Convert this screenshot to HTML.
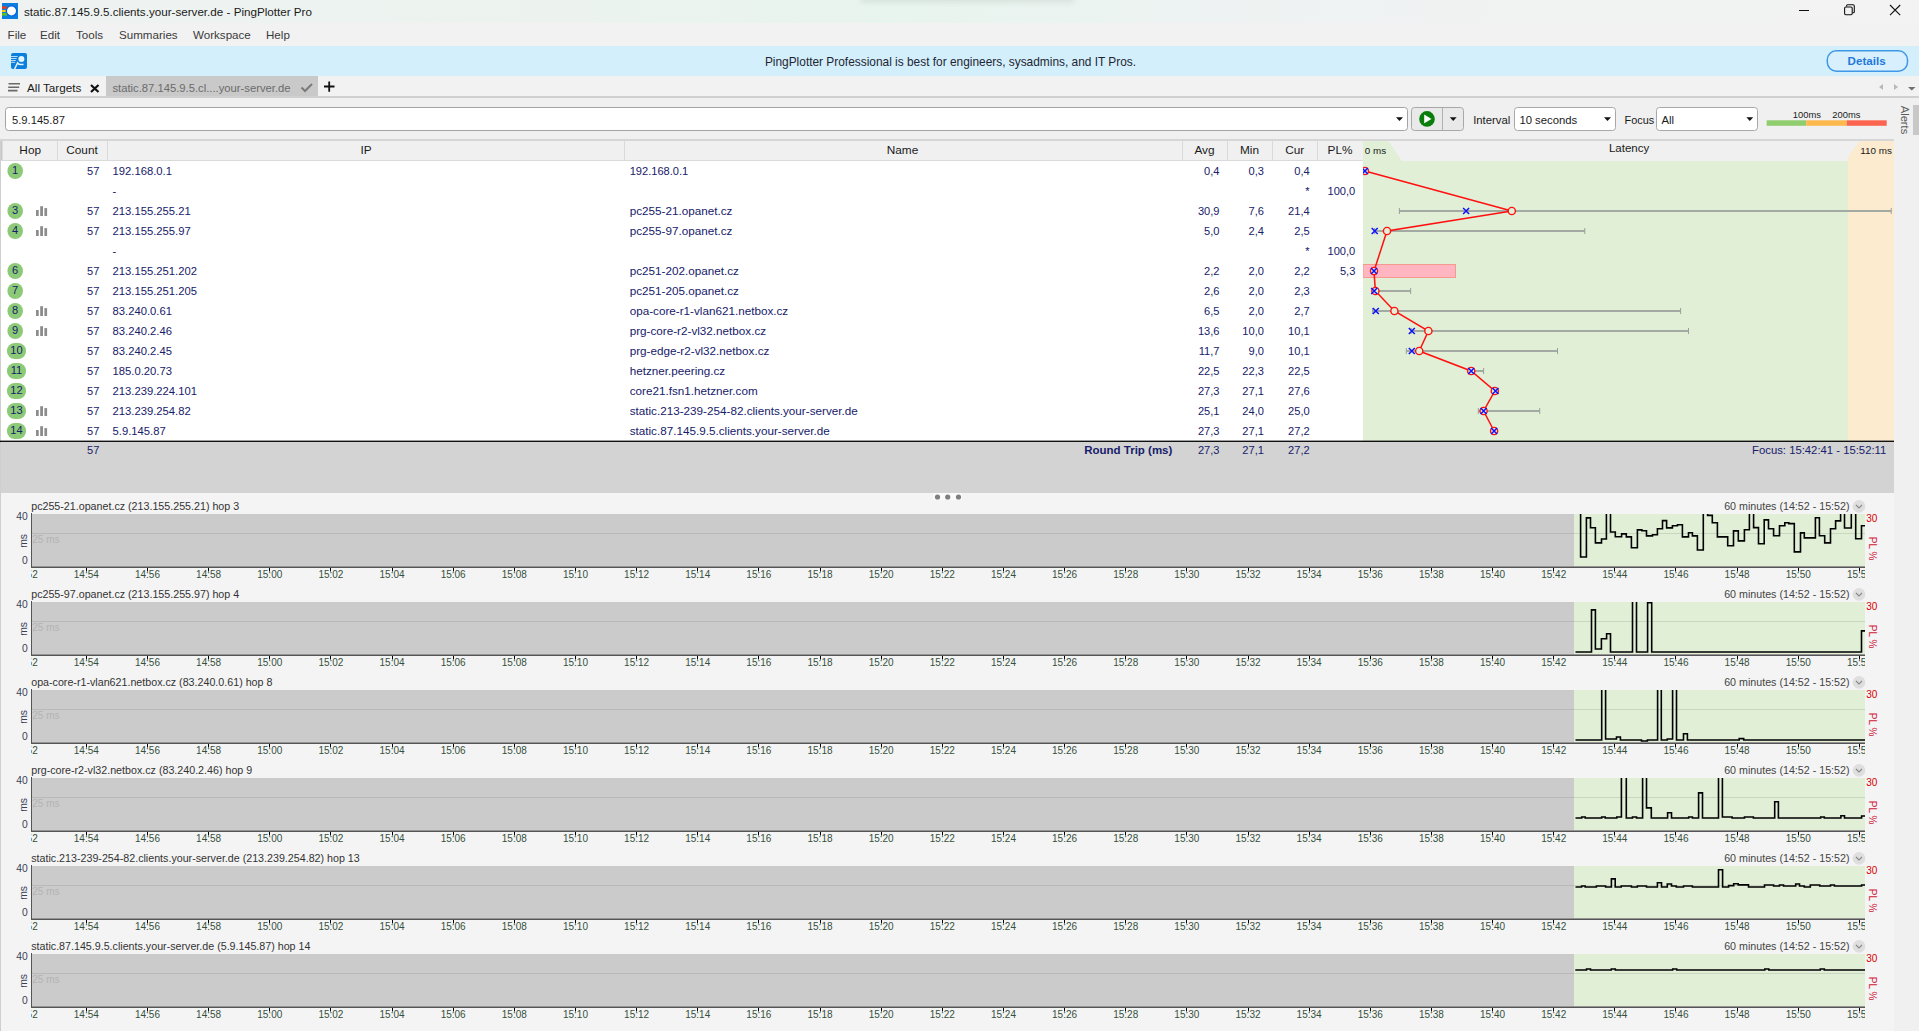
<!DOCTYPE html>
<html><head><meta charset="utf-8"><title>PingPlotter Pro</title>
<style>
html,body{margin:0;padding:0;background:#f0f0f0;overflow:hidden;}
svg{display:block;font-family:"Liberation Sans", sans-serif;}
text{white-space:pre;}
</style></head><body>
<svg width="1919" height="1031" viewBox="0 0 1919 1031">
<defs><linearGradient id="tg" x1="0" x2="1" y1="0" y2="0"><stop offset="0" stop-color="#eef3f1"/><stop offset="0.3" stop-color="#ecf3ef"/><stop offset="0.47" stop-color="#e8f4ee"/><stop offset="0.62" stop-color="#edf3f2"/><stop offset="0.8" stop-color="#f1f2f2"/><stop offset="1" stop-color="#f3f3f3"/></linearGradient><clipPath id="gclip"><rect x="1363" y="161" width="531" height="279"/></clipPath><clipPath id="plotclip"><rect x="31" y="0" width="1834" height="1031"/></clipPath></defs>
<rect x="0" y="0" width="1919" height="23" fill="url(#tg)" />
<defs><filter id="blr" x="-20%" y="-200%" width="140%" height="500%"><feGaussianBlur stdDeviation="2.5"/></filter></defs>
<rect x="860" y="-5" width="215" height="8" rx="4" fill="#506050" opacity="0.10" filter="url(#blr)"/>
<rect x="0" y="23" width="1919" height="23" fill="#f2f2f2" />
<rect x="0" y="46" width="1919" height="30" fill="#d4effc" />
<rect x="0" y="76" width="1919" height="20" fill="#f2f2f2" />
<rect x="0" y="96" width="1919" height="2.6" fill="#d0d0d0" />
<rect x="0" y="98" width="1919" height="43" fill="#f0f0f0" />
<rect x="0" y="139" width="1894" height="2" fill="#d6d6d6" />
<rect x="2" y="3" width="16" height="16" fill="#0a7fe0" />
<circle cx="11.5" cy="10.9" r="5.6" fill="#0062d6"/>
<circle cx="11.5" cy="10.9" r="4.5" fill="#ffffff"/>
<path d="M2,6.4 h4.8 v2.4 h-4.8 z" fill="#f03a17"/>
<path d="M2,10 h3.7 v2 h-3.7 z" fill="#ffcc00"/>
<path d="M2,13 h4.8 v2.6 h-4.8 z" fill="#5cc21a"/>
<text x="24" y="15.5" font-size="11.65" fill="#1a1a1a" text-anchor="start" font-weight="400" >static.87.145.9.5.clients.your-server.de - PingPlotter Pro</text>
<line x1="1799" y1="10.5" x2="1809" y2="10.5" stroke="#111" stroke-width="1" />
<rect x="1844.6" y="7" width="7.6" height="7.8" rx="1.2" fill="none" stroke="#111" stroke-width="1.1"/>
<path d="M1846.6,6.6 v-0.8 q0,-1 1,-1 h5.4 q1.3,0 1.3,1.3 v5.6 q0,1 -1,1 h-0.8" fill="none" stroke="#111" stroke-width="1.1"/>
<path d="M1890,5 L1900.2,15.2 M1900.2,5 L1890,15.2" stroke="#111" stroke-width="1.1"/>
<text x="7.6" y="38.8" font-size="11.6" fill="#3a3a3a" text-anchor="start" font-weight="400" >File</text>
<text x="40" y="38.8" font-size="11.6" fill="#3a3a3a" text-anchor="start" font-weight="400" >Edit</text>
<text x="76" y="38.8" font-size="11.6" fill="#3a3a3a" text-anchor="start" font-weight="400" >Tools</text>
<text x="119" y="38.8" font-size="11.6" fill="#3a3a3a" text-anchor="start" font-weight="400" >Summaries</text>
<text x="193" y="38.8" font-size="11.6" fill="#3a3a3a" text-anchor="start" font-weight="400" >Workspace</text>
<text x="266" y="38.8" font-size="11.6" fill="#3a3a3a" text-anchor="start" font-weight="400" >Help</text>
<rect x="11" y="53" width="16" height="16" rx="2" fill="#0a80dc"/>
<path d="M11,56.5 h6.6 M11,58.5 h5.6 M11,60.5 h4.8 M11,62.3 h4.2" stroke="#b8dcf6" stroke-width="1"/>
<circle cx="21.4" cy="59" r="3" fill="#e6f4fd"/>
<path d="M14.6,69 L17.6,62.8 C18.5,64.5 20.5,65 23.5,64.3" fill="none" stroke="#e6f4fd" stroke-width="1.5"/>
<text x="950.5" y="66.4" font-size="11.9" fill="#1e2633" text-anchor="middle" font-weight="400" >PingPlotter Professional is best for engineers, sysadmins, and IT Pros.</text>
<rect x="1827.3" y="50.8" width="80.2" height="20.4" rx="9" fill="#d8f0fd" stroke="#4097e6" stroke-width="1.5"/>
<text x="1866.6" y="65.3" font-size="11.6" fill="#1f78dc" text-anchor="middle" font-weight="700" >Details</text>
<path d="M8.5,83.8 h11.5 M8.2,87.2 h11 M8,90.6 h9.5" stroke="#6a6a6a" stroke-width="1.6"/>
<text x="27" y="91.6" font-size="11.7" fill="#1a1a1a" text-anchor="start" font-weight="400" >All Targets</text>
<path d="M91,85 L98.5,92 M98.5,85 L91,92" stroke="#111" stroke-width="2.2"/>
<rect x="106" y="76" width="212" height="20" fill="#c9c9c9" />
<text x="112.4" y="91.5" font-size="11.25" fill="#6b6b6b" text-anchor="start" font-weight="400" >static.87.145.9.5.cl....your-server.de</text>
<path d="M301.5,87.5 L305,91 L312,84" fill="none" stroke="#7a7a7a" stroke-width="2"/>
<path d="M324,86.5 h10.5 M329.2,81.5 v10.2" stroke="#111" stroke-width="1.8"/>
<path d="M1883,84 L1879,87 L1883,90 z" fill="#b8b8b8"/>
<path d="M1894,84 L1898,87 L1894,90 z" fill="#b8b8b8"/>
<path d="M1908,87 L1915.5,87 L1911.75,90.5 z" fill="#707070"/>
<rect x="5.5" y="107.5" width="1402" height="23" rx="3" fill="#fff" stroke="#a3a3a3" stroke-width="1"/>
<text x="12" y="124.2" font-size="11.2" fill="#1a1a1a" text-anchor="start" font-weight="400" >5.9.145.87</text>
<path d="M1396,117.2 L1403,117.2 L1399.5,121 z" fill="#111"/>
<rect x="1411.5" y="107.5" width="52" height="23" rx="3" fill="#e9e9e9" stroke="#a8a8a8" stroke-width="1"/>
<line x1="1442.5" y1="108" x2="1442.5" y2="130" stroke="#b0b0b0" stroke-width="1" />
<circle cx="1427" cy="118.9" r="7.8" fill="#0a7d0a"/>
<path d="M1424.2,114.6 L1431.5,118.9 L1424.2,123.2 z" fill="#fff"/>
<path d="M1449.8,117.2 L1456.6,117.2 L1453.2,121 z" fill="#111"/>
<text x="1473.2" y="123.6" font-size="11.3" fill="#1a1a1a" text-anchor="start" font-weight="400" >Interval</text>
<rect x="1514.5" y="107.5" width="101" height="23" rx="3" fill="#fff" stroke="#a8a8a8" stroke-width="1"/>
<text x="1519.4" y="124.2" font-size="11.3" fill="#1a1a1a" text-anchor="start" font-weight="400" >10 seconds</text>
<path d="M1604,117.2 L1611,117.2 L1607.5,121 z" fill="#111"/>
<text x="1624.5" y="123.6" font-size="10.9" fill="#1a1a1a" text-anchor="start" font-weight="400" >Focus</text>
<rect x="1656.5" y="107.5" width="101" height="23" rx="3" fill="#fff" stroke="#a8a8a8" stroke-width="1"/>
<text x="1661.5" y="124.2" font-size="11.3" fill="#1a1a1a" text-anchor="start" font-weight="400" >All</text>
<path d="M1746.4,117.2 L1753.2,117.2 L1749.8,121 z" fill="#111"/>
<text x="1792.8" y="117.8" font-size="9.4" fill="#1a1a1a" text-anchor="start" font-weight="400" >100ms</text>
<text x="1832.3" y="117.8" font-size="9.4" fill="#1a1a1a" text-anchor="start" font-weight="400" >200ms</text>
<rect x="1766.7" y="120.3" width="39.5" height="5.5" fill="#8fcd6e" />
<rect x="1806.2" y="120.3" width="40.5" height="5.5" fill="#fdb94e" />
<rect x="1846.7" y="120.3" width="40" height="5.5" fill="#fb6550" />
<text x="0" y="0" font-size="11.2" fill="#5a5a5a" text-anchor="middle" font-weight="400" transform="translate(1901.2,120) rotate(90)">Alerts</text>
<rect x="1913" y="105" width="6" height="30" fill="#c8c8c8" />
<rect x="0" y="141" width="1894" height="20" fill="#f0f0f0" />
<rect x="0" y="141" width="2.5" height="20" fill="#c8c8c8" />
<rect x="0" y="160" width="1363" height="1" fill="#dadada" />
<rect x="57" y="141" width="1" height="19" fill="#d9d9d9" />
<rect x="107" y="141" width="1" height="19" fill="#d9d9d9" />
<rect x="624" y="141" width="1" height="19" fill="#d9d9d9" />
<rect x="1182" y="141" width="1" height="19" fill="#d9d9d9" />
<rect x="1227" y="141" width="1" height="19" fill="#d9d9d9" />
<rect x="1272" y="141" width="1" height="19" fill="#d9d9d9" />
<rect x="1317" y="141" width="1" height="19" fill="#d9d9d9" />
<text x="30.2" y="153.8" font-size="11.8" fill="#1a1a1a" text-anchor="middle" font-weight="400" >Hop</text>
<text x="82" y="153.8" font-size="11.8" fill="#1a1a1a" text-anchor="middle" font-weight="400" >Count</text>
<text x="366" y="153.8" font-size="11.8" fill="#1a1a1a" text-anchor="middle" font-weight="400" >IP</text>
<text x="902.5" y="153.8" font-size="11.8" fill="#1a1a1a" text-anchor="middle" font-weight="400" >Name</text>
<text x="1204.5" y="153.8" font-size="11.8" fill="#1a1a1a" text-anchor="middle" font-weight="400" >Avg</text>
<text x="1249.5" y="153.8" font-size="11.8" fill="#1a1a1a" text-anchor="middle" font-weight="400" >Min</text>
<text x="1294.8" y="153.8" font-size="11.8" fill="#1a1a1a" text-anchor="middle" font-weight="400" >Cur</text>
<text x="1340" y="153.8" font-size="11.8" fill="#1a1a1a" text-anchor="middle" font-weight="400" >PL%</text>
<rect x="0" y="161" width="1363" height="280" fill="#ffffff" />
<rect x="0" y="141" width="1" height="890" fill="#cfcfcf" />
<path d="M1363,141 L1388.3,141 L1401.8,161 L1848,161 L1848,157 L1860,141 L1894,141 L1894,441 L1363,441 z" fill="#e0efd6"/>
<path d="M1848,441 L1848,157 L1860,141 L1894,141 L1894,441 z" fill="#fdebd0"/>
<text x="1364.8" y="153.8" font-size="9.8" fill="#1a1a1a" text-anchor="start" font-weight="400" >0 ms</text>
<text x="1629.1" y="152.3" font-size="11.5" fill="#1a1a1a" text-anchor="middle" font-weight="400" >Latency</text>
<text x="1892" y="154" font-size="9.9" fill="#1a1a1a" text-anchor="end" font-weight="400" >110 ms</text>
<rect x="7.3999999999999995" y="163" width="15.6" height="16" rx="8" fill="#8dca78"/>
<text x="15.2" y="173.9" font-size="11.1" fill="#16206a" text-anchor="middle" font-weight="400" >1</text>
<text x="99.4" y="174.5" font-size="11.1" fill="#16206a" text-anchor="end" font-weight="400" >57</text>
<text x="112.5" y="174.5" font-size="11.25" fill="#16206a" text-anchor="start" font-weight="400" >192.168.0.1</text>
<text x="629.7" y="174.5" font-size="11.1" fill="#16206a" text-anchor="start" font-weight="400" >192.168.0.1</text>
<text x="1219.5" y="174.5" font-size="11.1" fill="#16206a" text-anchor="end" font-weight="400" >0,4</text>
<text x="1263.9" y="174.5" font-size="11.1" fill="#16206a" text-anchor="end" font-weight="400" >0,3</text>
<text x="1309.7" y="174.5" font-size="11.1" fill="#16206a" text-anchor="end" font-weight="400" >0,4</text>
<text x="112.5" y="194.5" font-size="11.25" fill="#16206a" text-anchor="start" font-weight="400" >-</text>
<text x="1309.7" y="194.5" font-size="11.1" fill="#16206a" text-anchor="end" font-weight="400" >*</text>
<text x="1355.3" y="194.5" font-size="11.1" fill="#16206a" text-anchor="end" font-weight="400" >100,0</text>
<rect x="7.3999999999999995" y="203" width="15.6" height="16" rx="8" fill="#8dca78"/>
<text x="15.2" y="213.9" font-size="11.1" fill="#16206a" text-anchor="middle" font-weight="400" >3</text>
<rect x="36" y="210" width="2.7" height="6" fill="#8c8c8c" />
<rect x="40.2" y="206.2" width="2.8" height="9.8" fill="#8c8c8c" />
<rect x="44.4" y="208.1" width="2.7" height="7.9" fill="#8c8c8c" />
<text x="99.4" y="214.5" font-size="11.1" fill="#16206a" text-anchor="end" font-weight="400" >57</text>
<text x="112.5" y="214.5" font-size="11.25" fill="#16206a" text-anchor="start" font-weight="400" >213.155.255.21</text>
<text x="629.7" y="214.5" font-size="11.7" fill="#16206a" text-anchor="start" font-weight="400" >pc255-21.opanet.cz</text>
<text x="1219.5" y="214.5" font-size="11.1" fill="#16206a" text-anchor="end" font-weight="400" >30,9</text>
<text x="1263.9" y="214.5" font-size="11.1" fill="#16206a" text-anchor="end" font-weight="400" >7,6</text>
<text x="1309.7" y="214.5" font-size="11.1" fill="#16206a" text-anchor="end" font-weight="400" >21,4</text>
<rect x="7.3999999999999995" y="223" width="15.6" height="16" rx="8" fill="#8dca78"/>
<text x="15.2" y="233.9" font-size="11.1" fill="#16206a" text-anchor="middle" font-weight="400" >4</text>
<rect x="36" y="230" width="2.7" height="6" fill="#8c8c8c" />
<rect x="40.2" y="226.2" width="2.8" height="9.8" fill="#8c8c8c" />
<rect x="44.4" y="228.1" width="2.7" height="7.9" fill="#8c8c8c" />
<text x="99.4" y="234.5" font-size="11.1" fill="#16206a" text-anchor="end" font-weight="400" >57</text>
<text x="112.5" y="234.5" font-size="11.25" fill="#16206a" text-anchor="start" font-weight="400" >213.155.255.97</text>
<text x="629.7" y="234.5" font-size="11.7" fill="#16206a" text-anchor="start" font-weight="400" >pc255-97.opanet.cz</text>
<text x="1219.5" y="234.5" font-size="11.1" fill="#16206a" text-anchor="end" font-weight="400" >5,0</text>
<text x="1263.9" y="234.5" font-size="11.1" fill="#16206a" text-anchor="end" font-weight="400" >2,4</text>
<text x="1309.7" y="234.5" font-size="11.1" fill="#16206a" text-anchor="end" font-weight="400" >2,5</text>
<text x="112.5" y="254.5" font-size="11.25" fill="#16206a" text-anchor="start" font-weight="400" >-</text>
<text x="1309.7" y="254.5" font-size="11.1" fill="#16206a" text-anchor="end" font-weight="400" >*</text>
<text x="1355.3" y="254.5" font-size="11.1" fill="#16206a" text-anchor="end" font-weight="400" >100,0</text>
<rect x="7.3999999999999995" y="263" width="15.6" height="16" rx="8" fill="#8dca78"/>
<text x="15.2" y="273.9" font-size="11.1" fill="#16206a" text-anchor="middle" font-weight="400" >6</text>
<text x="99.4" y="274.5" font-size="11.1" fill="#16206a" text-anchor="end" font-weight="400" >57</text>
<text x="112.5" y="274.5" font-size="11.25" fill="#16206a" text-anchor="start" font-weight="400" >213.155.251.202</text>
<text x="629.7" y="274.5" font-size="11.7" fill="#16206a" text-anchor="start" font-weight="400" >pc251-202.opanet.cz</text>
<text x="1219.5" y="274.5" font-size="11.1" fill="#16206a" text-anchor="end" font-weight="400" >2,2</text>
<text x="1263.9" y="274.5" font-size="11.1" fill="#16206a" text-anchor="end" font-weight="400" >2,0</text>
<text x="1309.7" y="274.5" font-size="11.1" fill="#16206a" text-anchor="end" font-weight="400" >2,2</text>
<text x="1355.3" y="274.5" font-size="11.1" fill="#16206a" text-anchor="end" font-weight="400" >5,3</text>
<rect x="7.3999999999999995" y="283" width="15.6" height="16" rx="8" fill="#8dca78"/>
<text x="15.2" y="293.9" font-size="11.1" fill="#16206a" text-anchor="middle" font-weight="400" >7</text>
<text x="99.4" y="294.5" font-size="11.1" fill="#16206a" text-anchor="end" font-weight="400" >57</text>
<text x="112.5" y="294.5" font-size="11.25" fill="#16206a" text-anchor="start" font-weight="400" >213.155.251.205</text>
<text x="629.7" y="294.5" font-size="11.7" fill="#16206a" text-anchor="start" font-weight="400" >pc251-205.opanet.cz</text>
<text x="1219.5" y="294.5" font-size="11.1" fill="#16206a" text-anchor="end" font-weight="400" >2,6</text>
<text x="1263.9" y="294.5" font-size="11.1" fill="#16206a" text-anchor="end" font-weight="400" >2,0</text>
<text x="1309.7" y="294.5" font-size="11.1" fill="#16206a" text-anchor="end" font-weight="400" >2,3</text>
<rect x="7.3999999999999995" y="303" width="15.6" height="16" rx="8" fill="#8dca78"/>
<text x="15.2" y="313.9" font-size="11.1" fill="#16206a" text-anchor="middle" font-weight="400" >8</text>
<rect x="36" y="310" width="2.7" height="6" fill="#8c8c8c" />
<rect x="40.2" y="306.2" width="2.8" height="9.8" fill="#8c8c8c" />
<rect x="44.4" y="308.1" width="2.7" height="7.9" fill="#8c8c8c" />
<text x="99.4" y="314.5" font-size="11.1" fill="#16206a" text-anchor="end" font-weight="400" >57</text>
<text x="112.5" y="314.5" font-size="11.25" fill="#16206a" text-anchor="start" font-weight="400" >83.240.0.61</text>
<text x="629.7" y="314.5" font-size="11.7" fill="#16206a" text-anchor="start" font-weight="400" >opa-core-r1-vlan621.netbox.cz</text>
<text x="1219.5" y="314.5" font-size="11.1" fill="#16206a" text-anchor="end" font-weight="400" >6,5</text>
<text x="1263.9" y="314.5" font-size="11.1" fill="#16206a" text-anchor="end" font-weight="400" >2,0</text>
<text x="1309.7" y="314.5" font-size="11.1" fill="#16206a" text-anchor="end" font-weight="400" >2,7</text>
<rect x="7.3999999999999995" y="323" width="15.6" height="16" rx="8" fill="#8dca78"/>
<text x="15.2" y="333.9" font-size="11.1" fill="#16206a" text-anchor="middle" font-weight="400" >9</text>
<rect x="36" y="330" width="2.7" height="6" fill="#8c8c8c" />
<rect x="40.2" y="326.2" width="2.8" height="9.8" fill="#8c8c8c" />
<rect x="44.4" y="328.1" width="2.7" height="7.9" fill="#8c8c8c" />
<text x="99.4" y="334.5" font-size="11.1" fill="#16206a" text-anchor="end" font-weight="400" >57</text>
<text x="112.5" y="334.5" font-size="11.25" fill="#16206a" text-anchor="start" font-weight="400" >83.240.2.46</text>
<text x="629.7" y="334.5" font-size="11.7" fill="#16206a" text-anchor="start" font-weight="400" >prg-core-r2-vl32.netbox.cz</text>
<text x="1219.5" y="334.5" font-size="11.1" fill="#16206a" text-anchor="end" font-weight="400" >13,6</text>
<text x="1263.9" y="334.5" font-size="11.1" fill="#16206a" text-anchor="end" font-weight="400" >10,0</text>
<text x="1309.7" y="334.5" font-size="11.1" fill="#16206a" text-anchor="end" font-weight="400" >10,1</text>
<rect x="6.9" y="343" width="19.2" height="16" rx="8" fill="#8dca78"/>
<text x="16.5" y="353.9" font-size="11.1" fill="#16206a" text-anchor="middle" font-weight="400" >10</text>
<text x="99.4" y="354.5" font-size="11.1" fill="#16206a" text-anchor="end" font-weight="400" >57</text>
<text x="112.5" y="354.5" font-size="11.25" fill="#16206a" text-anchor="start" font-weight="400" >83.240.2.45</text>
<text x="629.7" y="354.5" font-size="11.7" fill="#16206a" text-anchor="start" font-weight="400" >prg-edge-r2-vl32.netbox.cz</text>
<text x="1219.5" y="354.5" font-size="11.1" fill="#16206a" text-anchor="end" font-weight="400" >11,7</text>
<text x="1263.9" y="354.5" font-size="11.1" fill="#16206a" text-anchor="end" font-weight="400" >9,0</text>
<text x="1309.7" y="354.5" font-size="11.1" fill="#16206a" text-anchor="end" font-weight="400" >10,1</text>
<rect x="6.9" y="363" width="19.2" height="16" rx="8" fill="#8dca78"/>
<text x="16.5" y="373.9" font-size="11.1" fill="#16206a" text-anchor="middle" font-weight="400" >11</text>
<text x="99.4" y="374.5" font-size="11.1" fill="#16206a" text-anchor="end" font-weight="400" >57</text>
<text x="112.5" y="374.5" font-size="11.25" fill="#16206a" text-anchor="start" font-weight="400" >185.0.20.73</text>
<text x="629.7" y="374.5" font-size="11.7" fill="#16206a" text-anchor="start" font-weight="400" >hetzner.peering.cz</text>
<text x="1219.5" y="374.5" font-size="11.1" fill="#16206a" text-anchor="end" font-weight="400" >22,5</text>
<text x="1263.9" y="374.5" font-size="11.1" fill="#16206a" text-anchor="end" font-weight="400" >22,3</text>
<text x="1309.7" y="374.5" font-size="11.1" fill="#16206a" text-anchor="end" font-weight="400" >22,5</text>
<rect x="6.9" y="383" width="19.2" height="16" rx="8" fill="#8dca78"/>
<text x="16.5" y="393.9" font-size="11.1" fill="#16206a" text-anchor="middle" font-weight="400" >12</text>
<text x="99.4" y="394.5" font-size="11.1" fill="#16206a" text-anchor="end" font-weight="400" >57</text>
<text x="112.5" y="394.5" font-size="11.25" fill="#16206a" text-anchor="start" font-weight="400" >213.239.224.101</text>
<text x="629.7" y="394.5" font-size="11.7" fill="#16206a" text-anchor="start" font-weight="400" >core21.fsn1.hetzner.com</text>
<text x="1219.5" y="394.5" font-size="11.1" fill="#16206a" text-anchor="end" font-weight="400" >27,3</text>
<text x="1263.9" y="394.5" font-size="11.1" fill="#16206a" text-anchor="end" font-weight="400" >27,1</text>
<text x="1309.7" y="394.5" font-size="11.1" fill="#16206a" text-anchor="end" font-weight="400" >27,6</text>
<rect x="6.9" y="403" width="19.2" height="16" rx="8" fill="#8dca78"/>
<text x="16.5" y="413.9" font-size="11.1" fill="#16206a" text-anchor="middle" font-weight="400" >13</text>
<rect x="36" y="410" width="2.7" height="6" fill="#8c8c8c" />
<rect x="40.2" y="406.2" width="2.8" height="9.8" fill="#8c8c8c" />
<rect x="44.4" y="408.1" width="2.7" height="7.9" fill="#8c8c8c" />
<text x="99.4" y="414.5" font-size="11.1" fill="#16206a" text-anchor="end" font-weight="400" >57</text>
<text x="112.5" y="414.5" font-size="11.25" fill="#16206a" text-anchor="start" font-weight="400" >213.239.254.82</text>
<text x="629.7" y="414.5" font-size="11.7" fill="#16206a" text-anchor="start" font-weight="400" >static.213-239-254-82.clients.your-server.de</text>
<text x="1219.5" y="414.5" font-size="11.1" fill="#16206a" text-anchor="end" font-weight="400" >25,1</text>
<text x="1263.9" y="414.5" font-size="11.1" fill="#16206a" text-anchor="end" font-weight="400" >24,0</text>
<text x="1309.7" y="414.5" font-size="11.1" fill="#16206a" text-anchor="end" font-weight="400" >25,0</text>
<rect x="6.9" y="423" width="19.2" height="16" rx="8" fill="#8dca78"/>
<text x="16.5" y="433.9" font-size="11.1" fill="#16206a" text-anchor="middle" font-weight="400" >14</text>
<rect x="36" y="430" width="2.7" height="6" fill="#8c8c8c" />
<rect x="40.2" y="426.2" width="2.8" height="9.8" fill="#8c8c8c" />
<rect x="44.4" y="428.1" width="2.7" height="7.9" fill="#8c8c8c" />
<text x="99.4" y="434.5" font-size="11.1" fill="#16206a" text-anchor="end" font-weight="400" >57</text>
<text x="112.5" y="434.5" font-size="11.25" fill="#16206a" text-anchor="start" font-weight="400" >5.9.145.87</text>
<text x="629.7" y="434.5" font-size="11.7" fill="#16206a" text-anchor="start" font-weight="400" >static.87.145.9.5.clients.your-server.de</text>
<text x="1219.5" y="434.5" font-size="11.1" fill="#16206a" text-anchor="end" font-weight="400" >27,3</text>
<text x="1263.9" y="434.5" font-size="11.1" fill="#16206a" text-anchor="end" font-weight="400" >27,1</text>
<text x="1309.7" y="434.5" font-size="11.1" fill="#16206a" text-anchor="end" font-weight="400" >27,2</text>
<g clip-path="url(#gclip)">
<rect x="1363" y="264.5" width="92.5" height="13" fill="#ffb6c1" stroke="#f59a8c" stroke-width="1"/>
<line x1="1399.4" y1="211" x2="1891.2" y2="211" stroke="#a3aaa3" stroke-width="2" />
<line x1="1399.4" y1="208" x2="1399.4" y2="214" stroke="#9aa09a" stroke-width="1" />
<line x1="1891.2" y1="208" x2="1891.2" y2="214" stroke="#9aa09a" stroke-width="1" />
<line x1="1374.6" y1="231" x2="1584.8" y2="231" stroke="#a3aaa3" stroke-width="2" />
<line x1="1374.6" y1="228" x2="1374.6" y2="234" stroke="#9aa09a" stroke-width="1" />
<line x1="1584.8" y1="228" x2="1584.8" y2="234" stroke="#9aa09a" stroke-width="1" />
<line x1="1372.6" y1="291" x2="1410.6" y2="291" stroke="#a3aaa3" stroke-width="2" />
<line x1="1372.6" y1="288" x2="1372.6" y2="294" stroke="#9aa09a" stroke-width="1" />
<line x1="1410.6" y1="288" x2="1410.6" y2="294" stroke="#9aa09a" stroke-width="1" />
<line x1="1372.6" y1="311" x2="1680.6" y2="311" stroke="#a3aaa3" stroke-width="2" />
<line x1="1372.6" y1="308" x2="1372.6" y2="314" stroke="#9aa09a" stroke-width="1" />
<line x1="1680.6" y1="308" x2="1680.6" y2="314" stroke="#9aa09a" stroke-width="1" />
<line x1="1411.2" y1="331" x2="1688.5" y2="331" stroke="#a3aaa3" stroke-width="2" />
<line x1="1411.2" y1="328" x2="1411.2" y2="334" stroke="#9aa09a" stroke-width="1" />
<line x1="1688.5" y1="328" x2="1688.5" y2="334" stroke="#9aa09a" stroke-width="1" />
<line x1="1406.3" y1="351" x2="1557.5" y2="351" stroke="#a3aaa3" stroke-width="2" />
<line x1="1406.3" y1="348" x2="1406.3" y2="354" stroke="#9aa09a" stroke-width="1" />
<line x1="1557.5" y1="348" x2="1557.5" y2="354" stroke="#9aa09a" stroke-width="1" />
<line x1="1470.3" y1="371" x2="1483.6" y2="371" stroke="#a3aaa3" stroke-width="2" />
<line x1="1470.3" y1="368" x2="1470.3" y2="374" stroke="#9aa09a" stroke-width="1" />
<line x1="1483.6" y1="368" x2="1483.6" y2="374" stroke="#9aa09a" stroke-width="1" />
<line x1="1478.3" y1="411" x2="1539.7" y2="411" stroke="#a3aaa3" stroke-width="2" />
<line x1="1478.3" y1="408" x2="1478.3" y2="414" stroke="#9aa09a" stroke-width="1" />
<line x1="1539.7" y1="408" x2="1539.7" y2="414" stroke="#9aa09a" stroke-width="1" />
<polyline points="1364.9,171 1511.8,211 1387,231 1374,271 1375.4,291 1394.4,311 1428.4,331 1419.2,351 1471.2,371 1494.8,391 1483.6,411 1494.1,431" fill="none" stroke="#ff1010" stroke-width="1.5"/>
<circle cx="1364.9" cy="171" r="3.6" fill="#e0efd6" stroke="#ff1010" stroke-width="1.4"/>
<circle cx="1511.8" cy="211" r="3.6" fill="#e0efd6" stroke="#ff1010" stroke-width="1.4"/>
<circle cx="1387" cy="231" r="3.6" fill="#e0efd6" stroke="#ff1010" stroke-width="1.4"/>
<circle cx="1374" cy="271" r="3.6" fill="#e0efd6" stroke="#ff1010" stroke-width="1.4"/>
<circle cx="1375.4" cy="291" r="3.6" fill="#e0efd6" stroke="#ff1010" stroke-width="1.4"/>
<circle cx="1394.4" cy="311" r="3.6" fill="#e0efd6" stroke="#ff1010" stroke-width="1.4"/>
<circle cx="1428.4" cy="331" r="3.6" fill="#e0efd6" stroke="#ff1010" stroke-width="1.4"/>
<circle cx="1419.2" cy="351" r="3.6" fill="#e0efd6" stroke="#ff1010" stroke-width="1.4"/>
<circle cx="1471.2" cy="371" r="3.6" fill="#e0efd6" stroke="#ff1010" stroke-width="1.4"/>
<circle cx="1494.8" cy="391" r="3.6" fill="#e0efd6" stroke="#ff1010" stroke-width="1.4"/>
<circle cx="1483.6" cy="411" r="3.6" fill="#e0efd6" stroke="#ff1010" stroke-width="1.4"/>
<circle cx="1494.1" cy="431" r="3.6" fill="#e0efd6" stroke="#ff1010" stroke-width="1.4"/>
<path d="M1361.9,168 L1367.9,174 M1367.9,168 L1361.9,174" stroke="#1010ff" stroke-width="1.5"/>
<path d="M1463.1,208 L1469.1,214 M1469.1,208 L1463.1,214" stroke="#1010ff" stroke-width="1.5"/>
<path d="M1371.7,228 L1377.7,234 M1377.7,228 L1371.7,234" stroke="#1010ff" stroke-width="1.5"/>
<path d="M1371,268 L1377,274 M1377,268 L1371,274" stroke="#1010ff" stroke-width="1.5"/>
<path d="M1371.2,288 L1377.2,294 M1377.2,288 L1371.2,294" stroke="#1010ff" stroke-width="1.5"/>
<path d="M1372.8,308 L1378.8,314 M1378.8,308 L1372.8,314" stroke="#1010ff" stroke-width="1.5"/>
<path d="M1408.8,328 L1414.8,334 M1414.8,328 L1408.8,334" stroke="#1010ff" stroke-width="1.5"/>
<path d="M1408.8,348 L1414.8,354 M1414.8,348 L1408.8,354" stroke="#1010ff" stroke-width="1.5"/>
<path d="M1468.2,368 L1474.2,374 M1474.2,368 L1468.2,374" stroke="#1010ff" stroke-width="1.5"/>
<path d="M1492.5,388 L1498.5,394 M1498.5,388 L1492.5,394" stroke="#1010ff" stroke-width="1.5"/>
<path d="M1480.6,408 L1486.6,414 M1486.6,408 L1480.6,414" stroke="#1010ff" stroke-width="1.5"/>
<path d="M1491.1,428 L1497.1,434 M1497.1,428 L1491.1,434" stroke="#1010ff" stroke-width="1.5"/>
</g>
<rect x="0" y="440.6" width="1894" height="1.5" fill="#111111" />
<rect x="1" y="442" width="1893" height="51" fill="#d3d3d3" />
<text x="99.4" y="454" font-size="11.1" fill="#16206a" text-anchor="end" font-weight="400" >57</text>
<text x="1084.2" y="453.8" font-size="11.5" fill="#16206a" text-anchor="start" font-weight="700" >Round Trip (ms)</text>
<text x="1219.5" y="454" font-size="11.1" fill="#16206a" text-anchor="end" font-weight="400" >27,3</text>
<text x="1263.9" y="454" font-size="11.1" fill="#16206a" text-anchor="end" font-weight="400" >27,1</text>
<text x="1309.7" y="454" font-size="11.1" fill="#16206a" text-anchor="end" font-weight="400" >27,2</text>
<text x="1886.3" y="454.3" font-size="11.3" fill="#16206a" text-anchor="end" font-weight="400" >Focus: 15:42:41 - 15:52:11</text>
<rect x="1" y="493" width="1893" height="538" fill="#f4f4f4" />
<rect x="933" y="493" width="29" height="7" fill="#fbfbfb" />
<circle cx="937.5" cy="497" r="2.6" fill="#7f7f7f"/>
<circle cx="947.7" cy="497" r="2.6" fill="#7f7f7f"/>
<circle cx="958.5" cy="497" r="2.6" fill="#7f7f7f"/>
<text x="31.2" y="509.5" font-size="10.7" fill="#333333" text-anchor="start" font-weight="400" >pc255-21.opanet.cz (213.155.255.21) hop 3</text>
<text x="1849.5" y="509.6" font-size="10.7" fill="#444444" text-anchor="end" font-weight="400" >60 minutes (14:52 - 15:52)</text>
<circle cx="1859" cy="506.4" r="6.3" fill="#dedede"/>
<path d="M1856,505 L1859,508 L1862,505" fill="none" stroke="#8a8a8a" stroke-width="1.1"/>
<rect x="32" y="514" width="1542" height="52" fill="#cbcbcb" />
<rect x="1574" y="514" width="291" height="52" fill="#e0efd6" />
<rect x="32" y="533" width="1542" height="1" fill="#b9b9b9" />
<rect x="1574" y="533" width="291" height="1" fill="#c9d7c0" />
<text x="32.3" y="542.8" font-size="10" fill="#b3b3b3" text-anchor="start" font-weight="400" >25 ms</text>
<rect x="31" y="513" width="1" height="54" fill="#555555" />
<rect x="31" y="566.4" width="1834" height="1.6" fill="#555555" />
<text x="27.7" y="519.8" font-size="10.3" fill="#3b4058" text-anchor="end" font-weight="400" >40</text>
<text x="27.7" y="563.8" font-size="10.3" fill="#3b4058" text-anchor="end" font-weight="400" >0</text>
<text x="0" y="0" font-size="10.3" fill="#3b4058" text-anchor="middle" font-weight="400" transform="translate(27.2,541) rotate(-90)">ms</text>
<text x="1866.3" y="521.9" font-size="10" fill="#d40000" text-anchor="start" font-weight="400" >30</text>
<text x="0" y="0" font-size="10" fill="#d0203a" text-anchor="middle" font-weight="400" transform="translate(1868.5,548.6) rotate(90)">PL %</text>
<clipPath id="cc0"><rect x="32" y="514" width="1833" height="52"/></clipPath>
<path d="M1580.6,514 V557 H1586.4 V517.9 H1590.5 V527.8 H1595.4 V542.9 H1601.5 V539 H1606.4 V514 M1610.5,514 V532 H1615.3 V536.7 H1621.6 V533.9 H1626.3 V536.9 H1631.4 V547.8 H1637.4 V529.9 H1641.9 V530.8 H1646.5 V535.9 H1652.5 V534.7 H1657.4 V528.7 H1662.5 V520.6 H1666.6 V527.9 H1672.4 V525.7 H1677.5 V524.7 H1682.4 V536.9 H1688.5 V532.8 H1692.4 V535.9 H1697.4 V550 H1703.3 V514 M1707.6,514 V515.4 H1712.3 V522.8 H1717.4 V536.9 H1727.7 V545.7 H1733.5 V530.9 H1738.3 V540.9 H1744.4 V529.8 H1749.4 V514 M1753.6,514 V527.6 H1758.5 V543.8 H1764.2 V519.9 H1768.5 V528.7 H1773.6 V535.8 H1779.5 V525.8 H1784.8 V522.7 H1788.8 V523.6 H1794.3 V551.9 H1800.5 V532.9 H1804.3 V537.9 H1815.4 V517.8 H1819.4 V535.8 H1824.7 V542.9 H1830.5 V528.7 H1835.6 V520.9 H1840.6 V514 M1844.5,514 V528 H1851.3 V514 M1855.7,514 V538.8 H1861.5 V525.8 H1864.8" fill="none" stroke="#000" stroke-width="1.6" stroke-linecap="square" clip-path="url(#cc0)"/>
<g clip-path="url(#plotclip)">
<rect x="25" y="568" width="1" height="3.5" fill="#000000" />
<text x="25.2" y="577.7" font-size="10" fill="#35513c" text-anchor="middle" font-weight="400" >14:52</text>
<rect x="86" y="568" width="1" height="3.5" fill="#000000" />
<text x="86.34" y="577.7" font-size="10" fill="#35513c" text-anchor="middle" font-weight="400" >14:54</text>
<rect x="147" y="568" width="1" height="3.5" fill="#000000" />
<text x="147.48" y="577.7" font-size="10" fill="#35513c" text-anchor="middle" font-weight="400" >14:56</text>
<rect x="208" y="568" width="1" height="3.5" fill="#000000" />
<text x="208.62" y="577.7" font-size="10" fill="#35513c" text-anchor="middle" font-weight="400" >14:58</text>
<rect x="269" y="568" width="1" height="3.5" fill="#000000" />
<text x="269.76" y="577.7" font-size="10" fill="#35513c" text-anchor="middle" font-weight="400" >15:00</text>
<rect x="330" y="568" width="1" height="3.5" fill="#000000" />
<text x="330.9" y="577.7" font-size="10" fill="#35513c" text-anchor="middle" font-weight="400" >15:02</text>
<rect x="392" y="568" width="1" height="3.5" fill="#000000" />
<text x="392.04" y="577.7" font-size="10" fill="#35513c" text-anchor="middle" font-weight="400" >15:04</text>
<rect x="453" y="568" width="1" height="3.5" fill="#000000" />
<text x="453.18" y="577.7" font-size="10" fill="#35513c" text-anchor="middle" font-weight="400" >15:06</text>
<rect x="514" y="568" width="1" height="3.5" fill="#000000" />
<text x="514.32" y="577.7" font-size="10" fill="#35513c" text-anchor="middle" font-weight="400" >15:08</text>
<rect x="575" y="568" width="1" height="3.5" fill="#000000" />
<text x="575.46" y="577.7" font-size="10" fill="#35513c" text-anchor="middle" font-weight="400" >15:10</text>
<rect x="636" y="568" width="1" height="3.5" fill="#000000" />
<text x="636.6" y="577.7" font-size="10" fill="#35513c" text-anchor="middle" font-weight="400" >15:12</text>
<rect x="697" y="568" width="1" height="3.5" fill="#000000" />
<text x="697.74" y="577.7" font-size="10" fill="#35513c" text-anchor="middle" font-weight="400" >15:14</text>
<rect x="758" y="568" width="1" height="3.5" fill="#000000" />
<text x="758.8800000000001" y="577.7" font-size="10" fill="#35513c" text-anchor="middle" font-weight="400" >15:16</text>
<rect x="820" y="568" width="1" height="3.5" fill="#000000" />
<text x="820.0200000000001" y="577.7" font-size="10" fill="#35513c" text-anchor="middle" font-weight="400" >15:18</text>
<rect x="881" y="568" width="1" height="3.5" fill="#000000" />
<text x="881.1600000000001" y="577.7" font-size="10" fill="#35513c" text-anchor="middle" font-weight="400" >15:20</text>
<rect x="942" y="568" width="1" height="3.5" fill="#000000" />
<text x="942.3000000000001" y="577.7" font-size="10" fill="#35513c" text-anchor="middle" font-weight="400" >15:22</text>
<rect x="1003" y="568" width="1" height="3.5" fill="#000000" />
<text x="1003.44" y="577.7" font-size="10" fill="#35513c" text-anchor="middle" font-weight="400" >15:24</text>
<rect x="1064" y="568" width="1" height="3.5" fill="#000000" />
<text x="1064.5800000000002" y="577.7" font-size="10" fill="#35513c" text-anchor="middle" font-weight="400" >15:26</text>
<rect x="1125" y="568" width="1" height="3.5" fill="#000000" />
<text x="1125.72" y="577.7" font-size="10" fill="#35513c" text-anchor="middle" font-weight="400" >15:28</text>
<rect x="1186" y="568" width="1" height="3.5" fill="#000000" />
<text x="1186.8600000000001" y="577.7" font-size="10" fill="#35513c" text-anchor="middle" font-weight="400" >15:30</text>
<rect x="1248" y="568" width="1" height="3.5" fill="#000000" />
<text x="1248.0" y="577.7" font-size="10" fill="#35513c" text-anchor="middle" font-weight="400" >15:32</text>
<rect x="1309" y="568" width="1" height="3.5" fill="#000000" />
<text x="1309.14" y="577.7" font-size="10" fill="#35513c" text-anchor="middle" font-weight="400" >15:34</text>
<rect x="1370" y="568" width="1" height="3.5" fill="#000000" />
<text x="1370.28" y="577.7" font-size="10" fill="#35513c" text-anchor="middle" font-weight="400" >15:36</text>
<rect x="1431" y="568" width="1" height="3.5" fill="#000000" />
<text x="1431.42" y="577.7" font-size="10" fill="#35513c" text-anchor="middle" font-weight="400" >15:38</text>
<rect x="1492" y="568" width="1" height="3.5" fill="#000000" />
<text x="1492.5600000000002" y="577.7" font-size="10" fill="#35513c" text-anchor="middle" font-weight="400" >15:40</text>
<rect x="1553" y="568" width="1" height="3.5" fill="#000000" />
<text x="1553.7" y="577.7" font-size="10" fill="#35513c" text-anchor="middle" font-weight="400" >15:42</text>
<rect x="1614" y="568" width="1" height="3.5" fill="#000000" />
<text x="1614.8400000000001" y="577.7" font-size="10" fill="#35513c" text-anchor="middle" font-weight="400" >15:44</text>
<rect x="1675" y="568" width="1" height="3.5" fill="#000000" />
<text x="1675.98" y="577.7" font-size="10" fill="#35513c" text-anchor="middle" font-weight="400" >15:46</text>
<rect x="1737" y="568" width="1" height="3.5" fill="#000000" />
<text x="1737.1200000000001" y="577.7" font-size="10" fill="#35513c" text-anchor="middle" font-weight="400" >15:48</text>
<rect x="1798" y="568" width="1" height="3.5" fill="#000000" />
<text x="1798.26" y="577.7" font-size="10" fill="#35513c" text-anchor="middle" font-weight="400" >15:50</text>
<rect x="1859" y="568" width="1" height="3.5" fill="#000000" />
<text x="1859.4" y="577.7" font-size="10" fill="#35513c" text-anchor="middle" font-weight="400" >15:52</text>
</g>
<text x="31.2" y="597.5" font-size="10.7" fill="#333333" text-anchor="start" font-weight="400" >pc255-97.opanet.cz (213.155.255.97) hop 4</text>
<text x="1849.5" y="597.6" font-size="10.7" fill="#444444" text-anchor="end" font-weight="400" >60 minutes (14:52 - 15:52)</text>
<circle cx="1859" cy="594.4" r="6.3" fill="#dedede"/>
<path d="M1856,593 L1859,596 L1862,593" fill="none" stroke="#8a8a8a" stroke-width="1.1"/>
<rect x="32" y="602" width="1542" height="52" fill="#cbcbcb" />
<rect x="1574" y="602" width="291" height="52" fill="#e0efd6" />
<rect x="32" y="621" width="1542" height="1" fill="#b9b9b9" />
<rect x="1574" y="621" width="291" height="1" fill="#c9d7c0" />
<text x="32.3" y="630.8" font-size="10" fill="#b3b3b3" text-anchor="start" font-weight="400" >25 ms</text>
<rect x="31" y="601" width="1" height="54" fill="#555555" />
<rect x="31" y="654.4" width="1834" height="1.6" fill="#555555" />
<text x="27.7" y="607.8" font-size="10.3" fill="#3b4058" text-anchor="end" font-weight="400" >40</text>
<text x="27.7" y="651.8" font-size="10.3" fill="#3b4058" text-anchor="end" font-weight="400" >0</text>
<text x="0" y="0" font-size="10.3" fill="#3b4058" text-anchor="middle" font-weight="400" transform="translate(27.2,629) rotate(-90)">ms</text>
<text x="1866.3" y="609.9" font-size="10" fill="#d40000" text-anchor="start" font-weight="400" >30</text>
<text x="0" y="0" font-size="10" fill="#d0203a" text-anchor="middle" font-weight="400" transform="translate(1868.5,636.6) rotate(90)">PL %</text>
<clipPath id="cc1"><rect x="32" y="602" width="1833" height="52"/></clipPath>
<path d="M1576.3,652 H1591.5 V609.9 H1595.4 V649 H1601.4 V638.8 H1606.6 V633.7 H1610.5 V652 H1632.5 V602 M1636.5,602 V652 H1647.6 V602.8 H1651.7 V652 H1861.5 V630.9 H1864.8" fill="none" stroke="#000" stroke-width="1.6" stroke-linecap="square" clip-path="url(#cc1)"/>
<g clip-path="url(#plotclip)">
<rect x="25" y="656" width="1" height="3.5" fill="#000000" />
<text x="25.2" y="665.7" font-size="10" fill="#35513c" text-anchor="middle" font-weight="400" >14:52</text>
<rect x="86" y="656" width="1" height="3.5" fill="#000000" />
<text x="86.34" y="665.7" font-size="10" fill="#35513c" text-anchor="middle" font-weight="400" >14:54</text>
<rect x="147" y="656" width="1" height="3.5" fill="#000000" />
<text x="147.48" y="665.7" font-size="10" fill="#35513c" text-anchor="middle" font-weight="400" >14:56</text>
<rect x="208" y="656" width="1" height="3.5" fill="#000000" />
<text x="208.62" y="665.7" font-size="10" fill="#35513c" text-anchor="middle" font-weight="400" >14:58</text>
<rect x="269" y="656" width="1" height="3.5" fill="#000000" />
<text x="269.76" y="665.7" font-size="10" fill="#35513c" text-anchor="middle" font-weight="400" >15:00</text>
<rect x="330" y="656" width="1" height="3.5" fill="#000000" />
<text x="330.9" y="665.7" font-size="10" fill="#35513c" text-anchor="middle" font-weight="400" >15:02</text>
<rect x="392" y="656" width="1" height="3.5" fill="#000000" />
<text x="392.04" y="665.7" font-size="10" fill="#35513c" text-anchor="middle" font-weight="400" >15:04</text>
<rect x="453" y="656" width="1" height="3.5" fill="#000000" />
<text x="453.18" y="665.7" font-size="10" fill="#35513c" text-anchor="middle" font-weight="400" >15:06</text>
<rect x="514" y="656" width="1" height="3.5" fill="#000000" />
<text x="514.32" y="665.7" font-size="10" fill="#35513c" text-anchor="middle" font-weight="400" >15:08</text>
<rect x="575" y="656" width="1" height="3.5" fill="#000000" />
<text x="575.46" y="665.7" font-size="10" fill="#35513c" text-anchor="middle" font-weight="400" >15:10</text>
<rect x="636" y="656" width="1" height="3.5" fill="#000000" />
<text x="636.6" y="665.7" font-size="10" fill="#35513c" text-anchor="middle" font-weight="400" >15:12</text>
<rect x="697" y="656" width="1" height="3.5" fill="#000000" />
<text x="697.74" y="665.7" font-size="10" fill="#35513c" text-anchor="middle" font-weight="400" >15:14</text>
<rect x="758" y="656" width="1" height="3.5" fill="#000000" />
<text x="758.8800000000001" y="665.7" font-size="10" fill="#35513c" text-anchor="middle" font-weight="400" >15:16</text>
<rect x="820" y="656" width="1" height="3.5" fill="#000000" />
<text x="820.0200000000001" y="665.7" font-size="10" fill="#35513c" text-anchor="middle" font-weight="400" >15:18</text>
<rect x="881" y="656" width="1" height="3.5" fill="#000000" />
<text x="881.1600000000001" y="665.7" font-size="10" fill="#35513c" text-anchor="middle" font-weight="400" >15:20</text>
<rect x="942" y="656" width="1" height="3.5" fill="#000000" />
<text x="942.3000000000001" y="665.7" font-size="10" fill="#35513c" text-anchor="middle" font-weight="400" >15:22</text>
<rect x="1003" y="656" width="1" height="3.5" fill="#000000" />
<text x="1003.44" y="665.7" font-size="10" fill="#35513c" text-anchor="middle" font-weight="400" >15:24</text>
<rect x="1064" y="656" width="1" height="3.5" fill="#000000" />
<text x="1064.5800000000002" y="665.7" font-size="10" fill="#35513c" text-anchor="middle" font-weight="400" >15:26</text>
<rect x="1125" y="656" width="1" height="3.5" fill="#000000" />
<text x="1125.72" y="665.7" font-size="10" fill="#35513c" text-anchor="middle" font-weight="400" >15:28</text>
<rect x="1186" y="656" width="1" height="3.5" fill="#000000" />
<text x="1186.8600000000001" y="665.7" font-size="10" fill="#35513c" text-anchor="middle" font-weight="400" >15:30</text>
<rect x="1248" y="656" width="1" height="3.5" fill="#000000" />
<text x="1248.0" y="665.7" font-size="10" fill="#35513c" text-anchor="middle" font-weight="400" >15:32</text>
<rect x="1309" y="656" width="1" height="3.5" fill="#000000" />
<text x="1309.14" y="665.7" font-size="10" fill="#35513c" text-anchor="middle" font-weight="400" >15:34</text>
<rect x="1370" y="656" width="1" height="3.5" fill="#000000" />
<text x="1370.28" y="665.7" font-size="10" fill="#35513c" text-anchor="middle" font-weight="400" >15:36</text>
<rect x="1431" y="656" width="1" height="3.5" fill="#000000" />
<text x="1431.42" y="665.7" font-size="10" fill="#35513c" text-anchor="middle" font-weight="400" >15:38</text>
<rect x="1492" y="656" width="1" height="3.5" fill="#000000" />
<text x="1492.5600000000002" y="665.7" font-size="10" fill="#35513c" text-anchor="middle" font-weight="400" >15:40</text>
<rect x="1553" y="656" width="1" height="3.5" fill="#000000" />
<text x="1553.7" y="665.7" font-size="10" fill="#35513c" text-anchor="middle" font-weight="400" >15:42</text>
<rect x="1614" y="656" width="1" height="3.5" fill="#000000" />
<text x="1614.8400000000001" y="665.7" font-size="10" fill="#35513c" text-anchor="middle" font-weight="400" >15:44</text>
<rect x="1675" y="656" width="1" height="3.5" fill="#000000" />
<text x="1675.98" y="665.7" font-size="10" fill="#35513c" text-anchor="middle" font-weight="400" >15:46</text>
<rect x="1737" y="656" width="1" height="3.5" fill="#000000" />
<text x="1737.1200000000001" y="665.7" font-size="10" fill="#35513c" text-anchor="middle" font-weight="400" >15:48</text>
<rect x="1798" y="656" width="1" height="3.5" fill="#000000" />
<text x="1798.26" y="665.7" font-size="10" fill="#35513c" text-anchor="middle" font-weight="400" >15:50</text>
<rect x="1859" y="656" width="1" height="3.5" fill="#000000" />
<text x="1859.4" y="665.7" font-size="10" fill="#35513c" text-anchor="middle" font-weight="400" >15:52</text>
</g>
<text x="31.2" y="685.5" font-size="10.7" fill="#333333" text-anchor="start" font-weight="400" >opa-core-r1-vlan621.netbox.cz (83.240.0.61) hop 8</text>
<text x="1849.5" y="685.6" font-size="10.7" fill="#444444" text-anchor="end" font-weight="400" >60 minutes (14:52 - 15:52)</text>
<circle cx="1859" cy="682.4" r="6.3" fill="#dedede"/>
<path d="M1856,681 L1859,684 L1862,681" fill="none" stroke="#8a8a8a" stroke-width="1.1"/>
<rect x="32" y="690" width="1542" height="52" fill="#cbcbcb" />
<rect x="1574" y="690" width="291" height="52" fill="#e0efd6" />
<rect x="32" y="709" width="1542" height="1" fill="#b9b9b9" />
<rect x="1574" y="709" width="291" height="1" fill="#c9d7c0" />
<text x="32.3" y="718.8" font-size="10" fill="#b3b3b3" text-anchor="start" font-weight="400" >25 ms</text>
<rect x="31" y="689" width="1" height="54" fill="#555555" />
<rect x="31" y="742.4" width="1834" height="1.6" fill="#555555" />
<text x="27.7" y="695.8" font-size="10.3" fill="#3b4058" text-anchor="end" font-weight="400" >40</text>
<text x="27.7" y="739.8" font-size="10.3" fill="#3b4058" text-anchor="end" font-weight="400" >0</text>
<text x="0" y="0" font-size="10.3" fill="#3b4058" text-anchor="middle" font-weight="400" transform="translate(27.2,717) rotate(-90)">ms</text>
<text x="1866.3" y="697.9" font-size="10" fill="#d40000" text-anchor="start" font-weight="400" >30</text>
<text x="0" y="0" font-size="10" fill="#d0203a" text-anchor="middle" font-weight="400" transform="translate(1868.5,724.6) rotate(90)">PL %</text>
<clipPath id="cc2"><rect x="32" y="690" width="1833" height="52"/></clipPath>
<path d="M1576.3,740 H1601.7 V690 M1605.6,690 V739 H1616.5 V737 H1620.4 V740 H1641.5 V741 H1647.4 V740 H1657.6 V690 M1661.3,690 V740 H1667.3 V739 H1672.6 V690 M1676.5,690 V740 H1683.5 V733.8 H1687.4 V740 H1739.2 V738.6 H1743.7 V740 H1864.8" fill="none" stroke="#000" stroke-width="1.6" stroke-linecap="square" clip-path="url(#cc2)"/>
<g clip-path="url(#plotclip)">
<rect x="25" y="744" width="1" height="3.5" fill="#000000" />
<text x="25.2" y="753.7" font-size="10" fill="#35513c" text-anchor="middle" font-weight="400" >14:52</text>
<rect x="86" y="744" width="1" height="3.5" fill="#000000" />
<text x="86.34" y="753.7" font-size="10" fill="#35513c" text-anchor="middle" font-weight="400" >14:54</text>
<rect x="147" y="744" width="1" height="3.5" fill="#000000" />
<text x="147.48" y="753.7" font-size="10" fill="#35513c" text-anchor="middle" font-weight="400" >14:56</text>
<rect x="208" y="744" width="1" height="3.5" fill="#000000" />
<text x="208.62" y="753.7" font-size="10" fill="#35513c" text-anchor="middle" font-weight="400" >14:58</text>
<rect x="269" y="744" width="1" height="3.5" fill="#000000" />
<text x="269.76" y="753.7" font-size="10" fill="#35513c" text-anchor="middle" font-weight="400" >15:00</text>
<rect x="330" y="744" width="1" height="3.5" fill="#000000" />
<text x="330.9" y="753.7" font-size="10" fill="#35513c" text-anchor="middle" font-weight="400" >15:02</text>
<rect x="392" y="744" width="1" height="3.5" fill="#000000" />
<text x="392.04" y="753.7" font-size="10" fill="#35513c" text-anchor="middle" font-weight="400" >15:04</text>
<rect x="453" y="744" width="1" height="3.5" fill="#000000" />
<text x="453.18" y="753.7" font-size="10" fill="#35513c" text-anchor="middle" font-weight="400" >15:06</text>
<rect x="514" y="744" width="1" height="3.5" fill="#000000" />
<text x="514.32" y="753.7" font-size="10" fill="#35513c" text-anchor="middle" font-weight="400" >15:08</text>
<rect x="575" y="744" width="1" height="3.5" fill="#000000" />
<text x="575.46" y="753.7" font-size="10" fill="#35513c" text-anchor="middle" font-weight="400" >15:10</text>
<rect x="636" y="744" width="1" height="3.5" fill="#000000" />
<text x="636.6" y="753.7" font-size="10" fill="#35513c" text-anchor="middle" font-weight="400" >15:12</text>
<rect x="697" y="744" width="1" height="3.5" fill="#000000" />
<text x="697.74" y="753.7" font-size="10" fill="#35513c" text-anchor="middle" font-weight="400" >15:14</text>
<rect x="758" y="744" width="1" height="3.5" fill="#000000" />
<text x="758.8800000000001" y="753.7" font-size="10" fill="#35513c" text-anchor="middle" font-weight="400" >15:16</text>
<rect x="820" y="744" width="1" height="3.5" fill="#000000" />
<text x="820.0200000000001" y="753.7" font-size="10" fill="#35513c" text-anchor="middle" font-weight="400" >15:18</text>
<rect x="881" y="744" width="1" height="3.5" fill="#000000" />
<text x="881.1600000000001" y="753.7" font-size="10" fill="#35513c" text-anchor="middle" font-weight="400" >15:20</text>
<rect x="942" y="744" width="1" height="3.5" fill="#000000" />
<text x="942.3000000000001" y="753.7" font-size="10" fill="#35513c" text-anchor="middle" font-weight="400" >15:22</text>
<rect x="1003" y="744" width="1" height="3.5" fill="#000000" />
<text x="1003.44" y="753.7" font-size="10" fill="#35513c" text-anchor="middle" font-weight="400" >15:24</text>
<rect x="1064" y="744" width="1" height="3.5" fill="#000000" />
<text x="1064.5800000000002" y="753.7" font-size="10" fill="#35513c" text-anchor="middle" font-weight="400" >15:26</text>
<rect x="1125" y="744" width="1" height="3.5" fill="#000000" />
<text x="1125.72" y="753.7" font-size="10" fill="#35513c" text-anchor="middle" font-weight="400" >15:28</text>
<rect x="1186" y="744" width="1" height="3.5" fill="#000000" />
<text x="1186.8600000000001" y="753.7" font-size="10" fill="#35513c" text-anchor="middle" font-weight="400" >15:30</text>
<rect x="1248" y="744" width="1" height="3.5" fill="#000000" />
<text x="1248.0" y="753.7" font-size="10" fill="#35513c" text-anchor="middle" font-weight="400" >15:32</text>
<rect x="1309" y="744" width="1" height="3.5" fill="#000000" />
<text x="1309.14" y="753.7" font-size="10" fill="#35513c" text-anchor="middle" font-weight="400" >15:34</text>
<rect x="1370" y="744" width="1" height="3.5" fill="#000000" />
<text x="1370.28" y="753.7" font-size="10" fill="#35513c" text-anchor="middle" font-weight="400" >15:36</text>
<rect x="1431" y="744" width="1" height="3.5" fill="#000000" />
<text x="1431.42" y="753.7" font-size="10" fill="#35513c" text-anchor="middle" font-weight="400" >15:38</text>
<rect x="1492" y="744" width="1" height="3.5" fill="#000000" />
<text x="1492.5600000000002" y="753.7" font-size="10" fill="#35513c" text-anchor="middle" font-weight="400" >15:40</text>
<rect x="1553" y="744" width="1" height="3.5" fill="#000000" />
<text x="1553.7" y="753.7" font-size="10" fill="#35513c" text-anchor="middle" font-weight="400" >15:42</text>
<rect x="1614" y="744" width="1" height="3.5" fill="#000000" />
<text x="1614.8400000000001" y="753.7" font-size="10" fill="#35513c" text-anchor="middle" font-weight="400" >15:44</text>
<rect x="1675" y="744" width="1" height="3.5" fill="#000000" />
<text x="1675.98" y="753.7" font-size="10" fill="#35513c" text-anchor="middle" font-weight="400" >15:46</text>
<rect x="1737" y="744" width="1" height="3.5" fill="#000000" />
<text x="1737.1200000000001" y="753.7" font-size="10" fill="#35513c" text-anchor="middle" font-weight="400" >15:48</text>
<rect x="1798" y="744" width="1" height="3.5" fill="#000000" />
<text x="1798.26" y="753.7" font-size="10" fill="#35513c" text-anchor="middle" font-weight="400" >15:50</text>
<rect x="1859" y="744" width="1" height="3.5" fill="#000000" />
<text x="1859.4" y="753.7" font-size="10" fill="#35513c" text-anchor="middle" font-weight="400" >15:52</text>
</g>
<text x="31.2" y="773.5" font-size="10.7" fill="#333333" text-anchor="start" font-weight="400" >prg-core-r2-vl32.netbox.cz (83.240.2.46) hop 9</text>
<text x="1849.5" y="773.6" font-size="10.7" fill="#444444" text-anchor="end" font-weight="400" >60 minutes (14:52 - 15:52)</text>
<circle cx="1859" cy="770.4" r="6.3" fill="#dedede"/>
<path d="M1856,769 L1859,772 L1862,769" fill="none" stroke="#8a8a8a" stroke-width="1.1"/>
<rect x="32" y="778" width="1542" height="52" fill="#cbcbcb" />
<rect x="1574" y="778" width="291" height="52" fill="#e0efd6" />
<rect x="32" y="797" width="1542" height="1" fill="#b9b9b9" />
<rect x="1574" y="797" width="291" height="1" fill="#c9d7c0" />
<text x="32.3" y="806.8" font-size="10" fill="#b3b3b3" text-anchor="start" font-weight="400" >25 ms</text>
<rect x="31" y="777" width="1" height="54" fill="#555555" />
<rect x="31" y="830.4" width="1834" height="1.6" fill="#555555" />
<text x="27.7" y="783.8" font-size="10.3" fill="#3b4058" text-anchor="end" font-weight="400" >40</text>
<text x="27.7" y="827.8" font-size="10.3" fill="#3b4058" text-anchor="end" font-weight="400" >0</text>
<text x="0" y="0" font-size="10.3" fill="#3b4058" text-anchor="middle" font-weight="400" transform="translate(27.2,805) rotate(-90)">ms</text>
<text x="1866.3" y="785.9" font-size="10" fill="#d40000" text-anchor="start" font-weight="400" >30</text>
<text x="0" y="0" font-size="10" fill="#d0203a" text-anchor="middle" font-weight="400" transform="translate(1868.5,812.6) rotate(90)">PL %</text>
<clipPath id="cc3"><rect x="32" y="778" width="1833" height="52"/></clipPath>
<path d="M1576.3,818 H1581.7 V817 H1585.2 V818 H1601.7 V817 H1605.2 V818 H1616.8 V817 H1621.4 V778 M1626.3,778 V818 H1632.5 V817 H1636.5 V818 H1642.6 V778 M1646.5,778 V807.9 H1651.3 V818 H1667.6 V812.8 H1671.5 V818 H1688.7 V817 H1692.4 V818 H1698.6 V792.9 H1702.5 V818 H1718.5 V778 M1722.4,778 V817 H1732.1 V818 H1744.5 V817 H1753.4 V818 H1774.7 V801.8 H1778.4 V818 H1820.7 V817 H1824.3 V818 H1840.9 V815.7 H1844.5 V818 H1861.6 V816 H1864.8" fill="none" stroke="#000" stroke-width="1.6" stroke-linecap="square" clip-path="url(#cc3)"/>
<g clip-path="url(#plotclip)">
<rect x="25" y="832" width="1" height="3.5" fill="#000000" />
<text x="25.2" y="841.7" font-size="10" fill="#35513c" text-anchor="middle" font-weight="400" >14:52</text>
<rect x="86" y="832" width="1" height="3.5" fill="#000000" />
<text x="86.34" y="841.7" font-size="10" fill="#35513c" text-anchor="middle" font-weight="400" >14:54</text>
<rect x="147" y="832" width="1" height="3.5" fill="#000000" />
<text x="147.48" y="841.7" font-size="10" fill="#35513c" text-anchor="middle" font-weight="400" >14:56</text>
<rect x="208" y="832" width="1" height="3.5" fill="#000000" />
<text x="208.62" y="841.7" font-size="10" fill="#35513c" text-anchor="middle" font-weight="400" >14:58</text>
<rect x="269" y="832" width="1" height="3.5" fill="#000000" />
<text x="269.76" y="841.7" font-size="10" fill="#35513c" text-anchor="middle" font-weight="400" >15:00</text>
<rect x="330" y="832" width="1" height="3.5" fill="#000000" />
<text x="330.9" y="841.7" font-size="10" fill="#35513c" text-anchor="middle" font-weight="400" >15:02</text>
<rect x="392" y="832" width="1" height="3.5" fill="#000000" />
<text x="392.04" y="841.7" font-size="10" fill="#35513c" text-anchor="middle" font-weight="400" >15:04</text>
<rect x="453" y="832" width="1" height="3.5" fill="#000000" />
<text x="453.18" y="841.7" font-size="10" fill="#35513c" text-anchor="middle" font-weight="400" >15:06</text>
<rect x="514" y="832" width="1" height="3.5" fill="#000000" />
<text x="514.32" y="841.7" font-size="10" fill="#35513c" text-anchor="middle" font-weight="400" >15:08</text>
<rect x="575" y="832" width="1" height="3.5" fill="#000000" />
<text x="575.46" y="841.7" font-size="10" fill="#35513c" text-anchor="middle" font-weight="400" >15:10</text>
<rect x="636" y="832" width="1" height="3.5" fill="#000000" />
<text x="636.6" y="841.7" font-size="10" fill="#35513c" text-anchor="middle" font-weight="400" >15:12</text>
<rect x="697" y="832" width="1" height="3.5" fill="#000000" />
<text x="697.74" y="841.7" font-size="10" fill="#35513c" text-anchor="middle" font-weight="400" >15:14</text>
<rect x="758" y="832" width="1" height="3.5" fill="#000000" />
<text x="758.8800000000001" y="841.7" font-size="10" fill="#35513c" text-anchor="middle" font-weight="400" >15:16</text>
<rect x="820" y="832" width="1" height="3.5" fill="#000000" />
<text x="820.0200000000001" y="841.7" font-size="10" fill="#35513c" text-anchor="middle" font-weight="400" >15:18</text>
<rect x="881" y="832" width="1" height="3.5" fill="#000000" />
<text x="881.1600000000001" y="841.7" font-size="10" fill="#35513c" text-anchor="middle" font-weight="400" >15:20</text>
<rect x="942" y="832" width="1" height="3.5" fill="#000000" />
<text x="942.3000000000001" y="841.7" font-size="10" fill="#35513c" text-anchor="middle" font-weight="400" >15:22</text>
<rect x="1003" y="832" width="1" height="3.5" fill="#000000" />
<text x="1003.44" y="841.7" font-size="10" fill="#35513c" text-anchor="middle" font-weight="400" >15:24</text>
<rect x="1064" y="832" width="1" height="3.5" fill="#000000" />
<text x="1064.5800000000002" y="841.7" font-size="10" fill="#35513c" text-anchor="middle" font-weight="400" >15:26</text>
<rect x="1125" y="832" width="1" height="3.5" fill="#000000" />
<text x="1125.72" y="841.7" font-size="10" fill="#35513c" text-anchor="middle" font-weight="400" >15:28</text>
<rect x="1186" y="832" width="1" height="3.5" fill="#000000" />
<text x="1186.8600000000001" y="841.7" font-size="10" fill="#35513c" text-anchor="middle" font-weight="400" >15:30</text>
<rect x="1248" y="832" width="1" height="3.5" fill="#000000" />
<text x="1248.0" y="841.7" font-size="10" fill="#35513c" text-anchor="middle" font-weight="400" >15:32</text>
<rect x="1309" y="832" width="1" height="3.5" fill="#000000" />
<text x="1309.14" y="841.7" font-size="10" fill="#35513c" text-anchor="middle" font-weight="400" >15:34</text>
<rect x="1370" y="832" width="1" height="3.5" fill="#000000" />
<text x="1370.28" y="841.7" font-size="10" fill="#35513c" text-anchor="middle" font-weight="400" >15:36</text>
<rect x="1431" y="832" width="1" height="3.5" fill="#000000" />
<text x="1431.42" y="841.7" font-size="10" fill="#35513c" text-anchor="middle" font-weight="400" >15:38</text>
<rect x="1492" y="832" width="1" height="3.5" fill="#000000" />
<text x="1492.5600000000002" y="841.7" font-size="10" fill="#35513c" text-anchor="middle" font-weight="400" >15:40</text>
<rect x="1553" y="832" width="1" height="3.5" fill="#000000" />
<text x="1553.7" y="841.7" font-size="10" fill="#35513c" text-anchor="middle" font-weight="400" >15:42</text>
<rect x="1614" y="832" width="1" height="3.5" fill="#000000" />
<text x="1614.8400000000001" y="841.7" font-size="10" fill="#35513c" text-anchor="middle" font-weight="400" >15:44</text>
<rect x="1675" y="832" width="1" height="3.5" fill="#000000" />
<text x="1675.98" y="841.7" font-size="10" fill="#35513c" text-anchor="middle" font-weight="400" >15:46</text>
<rect x="1737" y="832" width="1" height="3.5" fill="#000000" />
<text x="1737.1200000000001" y="841.7" font-size="10" fill="#35513c" text-anchor="middle" font-weight="400" >15:48</text>
<rect x="1798" y="832" width="1" height="3.5" fill="#000000" />
<text x="1798.26" y="841.7" font-size="10" fill="#35513c" text-anchor="middle" font-weight="400" >15:50</text>
<rect x="1859" y="832" width="1" height="3.5" fill="#000000" />
<text x="1859.4" y="841.7" font-size="10" fill="#35513c" text-anchor="middle" font-weight="400" >15:52</text>
</g>
<text x="31.2" y="861.5" font-size="10.7" fill="#333333" text-anchor="start" font-weight="400" >static.213-239-254-82.clients.your-server.de (213.239.254.82) hop 13</text>
<text x="1849.5" y="861.6" font-size="10.7" fill="#444444" text-anchor="end" font-weight="400" >60 minutes (14:52 - 15:52)</text>
<circle cx="1859" cy="858.4" r="6.3" fill="#dedede"/>
<path d="M1856,857 L1859,860 L1862,857" fill="none" stroke="#8a8a8a" stroke-width="1.1"/>
<rect x="32" y="866" width="1542" height="52" fill="#cbcbcb" />
<rect x="1574" y="866" width="291" height="52" fill="#e0efd6" />
<rect x="32" y="885" width="1542" height="1" fill="#b9b9b9" />
<rect x="1574" y="885" width="291" height="1" fill="#c9d7c0" />
<text x="32.3" y="894.8" font-size="10" fill="#b3b3b3" text-anchor="start" font-weight="400" >25 ms</text>
<rect x="31" y="865" width="1" height="54" fill="#555555" />
<rect x="31" y="918.4" width="1834" height="1.6" fill="#555555" />
<text x="27.7" y="871.8" font-size="10.3" fill="#3b4058" text-anchor="end" font-weight="400" >40</text>
<text x="27.7" y="915.8" font-size="10.3" fill="#3b4058" text-anchor="end" font-weight="400" >0</text>
<text x="0" y="0" font-size="10.3" fill="#3b4058" text-anchor="middle" font-weight="400" transform="translate(27.2,893) rotate(-90)">ms</text>
<text x="1866.3" y="873.9" font-size="10" fill="#d40000" text-anchor="start" font-weight="400" >30</text>
<text x="0" y="0" font-size="10" fill="#d0203a" text-anchor="middle" font-weight="400" transform="translate(1868.5,900.6) rotate(90)">PL %</text>
<clipPath id="cc4"><rect x="32" y="866" width="1833" height="52"/></clipPath>
<path d="M1576.3,887 H1581.6 V886 H1585.2 V887 H1596.4 V886 H1605.6 V887 H1611.4 V878.9 H1615.2 V887 H1621.2 V886 H1631.4 V887 H1637.4 V886 H1646.5 V887 H1657.4 V882.8 H1661.5 V887 H1667.3 V884 H1671.5 V886 H1676.3 V887 H1683.5 V886 H1692.4 V887 H1718.5 V869.8 H1722.6 V887 H1728.6 V885.6 H1733.7 V883.8 H1738.2 V884.9 H1748.5 V887 H1764.5 V885 H1773.6 V886 H1779.5 V885 H1783.5 V886 H1795.7 V884 H1799.5 V886 H1804.3 V887 H1810.3 V885 H1819.7 V886 H1830.5 V885 H1834.4 V886 H1861.6 V885 H1864.8" fill="none" stroke="#000" stroke-width="1.6" stroke-linecap="square" clip-path="url(#cc4)"/>
<g clip-path="url(#plotclip)">
<rect x="25" y="920" width="1" height="3.5" fill="#000000" />
<text x="25.2" y="929.7" font-size="10" fill="#35513c" text-anchor="middle" font-weight="400" >14:52</text>
<rect x="86" y="920" width="1" height="3.5" fill="#000000" />
<text x="86.34" y="929.7" font-size="10" fill="#35513c" text-anchor="middle" font-weight="400" >14:54</text>
<rect x="147" y="920" width="1" height="3.5" fill="#000000" />
<text x="147.48" y="929.7" font-size="10" fill="#35513c" text-anchor="middle" font-weight="400" >14:56</text>
<rect x="208" y="920" width="1" height="3.5" fill="#000000" />
<text x="208.62" y="929.7" font-size="10" fill="#35513c" text-anchor="middle" font-weight="400" >14:58</text>
<rect x="269" y="920" width="1" height="3.5" fill="#000000" />
<text x="269.76" y="929.7" font-size="10" fill="#35513c" text-anchor="middle" font-weight="400" >15:00</text>
<rect x="330" y="920" width="1" height="3.5" fill="#000000" />
<text x="330.9" y="929.7" font-size="10" fill="#35513c" text-anchor="middle" font-weight="400" >15:02</text>
<rect x="392" y="920" width="1" height="3.5" fill="#000000" />
<text x="392.04" y="929.7" font-size="10" fill="#35513c" text-anchor="middle" font-weight="400" >15:04</text>
<rect x="453" y="920" width="1" height="3.5" fill="#000000" />
<text x="453.18" y="929.7" font-size="10" fill="#35513c" text-anchor="middle" font-weight="400" >15:06</text>
<rect x="514" y="920" width="1" height="3.5" fill="#000000" />
<text x="514.32" y="929.7" font-size="10" fill="#35513c" text-anchor="middle" font-weight="400" >15:08</text>
<rect x="575" y="920" width="1" height="3.5" fill="#000000" />
<text x="575.46" y="929.7" font-size="10" fill="#35513c" text-anchor="middle" font-weight="400" >15:10</text>
<rect x="636" y="920" width="1" height="3.5" fill="#000000" />
<text x="636.6" y="929.7" font-size="10" fill="#35513c" text-anchor="middle" font-weight="400" >15:12</text>
<rect x="697" y="920" width="1" height="3.5" fill="#000000" />
<text x="697.74" y="929.7" font-size="10" fill="#35513c" text-anchor="middle" font-weight="400" >15:14</text>
<rect x="758" y="920" width="1" height="3.5" fill="#000000" />
<text x="758.8800000000001" y="929.7" font-size="10" fill="#35513c" text-anchor="middle" font-weight="400" >15:16</text>
<rect x="820" y="920" width="1" height="3.5" fill="#000000" />
<text x="820.0200000000001" y="929.7" font-size="10" fill="#35513c" text-anchor="middle" font-weight="400" >15:18</text>
<rect x="881" y="920" width="1" height="3.5" fill="#000000" />
<text x="881.1600000000001" y="929.7" font-size="10" fill="#35513c" text-anchor="middle" font-weight="400" >15:20</text>
<rect x="942" y="920" width="1" height="3.5" fill="#000000" />
<text x="942.3000000000001" y="929.7" font-size="10" fill="#35513c" text-anchor="middle" font-weight="400" >15:22</text>
<rect x="1003" y="920" width="1" height="3.5" fill="#000000" />
<text x="1003.44" y="929.7" font-size="10" fill="#35513c" text-anchor="middle" font-weight="400" >15:24</text>
<rect x="1064" y="920" width="1" height="3.5" fill="#000000" />
<text x="1064.5800000000002" y="929.7" font-size="10" fill="#35513c" text-anchor="middle" font-weight="400" >15:26</text>
<rect x="1125" y="920" width="1" height="3.5" fill="#000000" />
<text x="1125.72" y="929.7" font-size="10" fill="#35513c" text-anchor="middle" font-weight="400" >15:28</text>
<rect x="1186" y="920" width="1" height="3.5" fill="#000000" />
<text x="1186.8600000000001" y="929.7" font-size="10" fill="#35513c" text-anchor="middle" font-weight="400" >15:30</text>
<rect x="1248" y="920" width="1" height="3.5" fill="#000000" />
<text x="1248.0" y="929.7" font-size="10" fill="#35513c" text-anchor="middle" font-weight="400" >15:32</text>
<rect x="1309" y="920" width="1" height="3.5" fill="#000000" />
<text x="1309.14" y="929.7" font-size="10" fill="#35513c" text-anchor="middle" font-weight="400" >15:34</text>
<rect x="1370" y="920" width="1" height="3.5" fill="#000000" />
<text x="1370.28" y="929.7" font-size="10" fill="#35513c" text-anchor="middle" font-weight="400" >15:36</text>
<rect x="1431" y="920" width="1" height="3.5" fill="#000000" />
<text x="1431.42" y="929.7" font-size="10" fill="#35513c" text-anchor="middle" font-weight="400" >15:38</text>
<rect x="1492" y="920" width="1" height="3.5" fill="#000000" />
<text x="1492.5600000000002" y="929.7" font-size="10" fill="#35513c" text-anchor="middle" font-weight="400" >15:40</text>
<rect x="1553" y="920" width="1" height="3.5" fill="#000000" />
<text x="1553.7" y="929.7" font-size="10" fill="#35513c" text-anchor="middle" font-weight="400" >15:42</text>
<rect x="1614" y="920" width="1" height="3.5" fill="#000000" />
<text x="1614.8400000000001" y="929.7" font-size="10" fill="#35513c" text-anchor="middle" font-weight="400" >15:44</text>
<rect x="1675" y="920" width="1" height="3.5" fill="#000000" />
<text x="1675.98" y="929.7" font-size="10" fill="#35513c" text-anchor="middle" font-weight="400" >15:46</text>
<rect x="1737" y="920" width="1" height="3.5" fill="#000000" />
<text x="1737.1200000000001" y="929.7" font-size="10" fill="#35513c" text-anchor="middle" font-weight="400" >15:48</text>
<rect x="1798" y="920" width="1" height="3.5" fill="#000000" />
<text x="1798.26" y="929.7" font-size="10" fill="#35513c" text-anchor="middle" font-weight="400" >15:50</text>
<rect x="1859" y="920" width="1" height="3.5" fill="#000000" />
<text x="1859.4" y="929.7" font-size="10" fill="#35513c" text-anchor="middle" font-weight="400" >15:52</text>
</g>
<text x="31.2" y="949.5" font-size="10.7" fill="#333333" text-anchor="start" font-weight="400" >static.87.145.9.5.clients.your-server.de (5.9.145.87) hop 14</text>
<text x="1849.5" y="949.6" font-size="10.7" fill="#444444" text-anchor="end" font-weight="400" >60 minutes (14:52 - 15:52)</text>
<circle cx="1859" cy="946.4" r="6.3" fill="#dedede"/>
<path d="M1856,945 L1859,948 L1862,945" fill="none" stroke="#8a8a8a" stroke-width="1.1"/>
<rect x="32" y="954" width="1542" height="52" fill="#cbcbcb" />
<rect x="1574" y="954" width="291" height="52" fill="#e0efd6" />
<rect x="32" y="973" width="1542" height="1" fill="#b9b9b9" />
<rect x="1574" y="973" width="291" height="1" fill="#c9d7c0" />
<text x="32.3" y="982.8" font-size="10" fill="#b3b3b3" text-anchor="start" font-weight="400" >25 ms</text>
<rect x="31" y="953" width="1" height="54" fill="#555555" />
<rect x="31" y="1006.4" width="1834" height="1.6" fill="#555555" />
<text x="27.7" y="959.8" font-size="10.3" fill="#3b4058" text-anchor="end" font-weight="400" >40</text>
<text x="27.7" y="1003.8" font-size="10.3" fill="#3b4058" text-anchor="end" font-weight="400" >0</text>
<text x="0" y="0" font-size="10.3" fill="#3b4058" text-anchor="middle" font-weight="400" transform="translate(27.2,981) rotate(-90)">ms</text>
<text x="1866.3" y="961.9" font-size="10" fill="#d40000" text-anchor="start" font-weight="400" >30</text>
<text x="0" y="0" font-size="10" fill="#d0203a" text-anchor="middle" font-weight="400" transform="translate(1868.5,988.6) rotate(90)">PL %</text>
<clipPath id="cc5"><rect x="32" y="954" width="1833" height="52"/></clipPath>
<path d="M1576.1,970 H1586.5 V969 H1590.5 V970 H1611.3 V969 H1615.3 V970 H1672.7 V969 H1676.7 V970 H1764.8 V969 H1768.8 V970 H1820.3 V969 H1824.3 V970 H1864.8" fill="none" stroke="#000" stroke-width="1.6" stroke-linecap="square" clip-path="url(#cc5)"/>
<g clip-path="url(#plotclip)">
<rect x="25" y="1008" width="1" height="3.5" fill="#000000" />
<text x="25.2" y="1017.7" font-size="10" fill="#35513c" text-anchor="middle" font-weight="400" >14:52</text>
<rect x="86" y="1008" width="1" height="3.5" fill="#000000" />
<text x="86.34" y="1017.7" font-size="10" fill="#35513c" text-anchor="middle" font-weight="400" >14:54</text>
<rect x="147" y="1008" width="1" height="3.5" fill="#000000" />
<text x="147.48" y="1017.7" font-size="10" fill="#35513c" text-anchor="middle" font-weight="400" >14:56</text>
<rect x="208" y="1008" width="1" height="3.5" fill="#000000" />
<text x="208.62" y="1017.7" font-size="10" fill="#35513c" text-anchor="middle" font-weight="400" >14:58</text>
<rect x="269" y="1008" width="1" height="3.5" fill="#000000" />
<text x="269.76" y="1017.7" font-size="10" fill="#35513c" text-anchor="middle" font-weight="400" >15:00</text>
<rect x="330" y="1008" width="1" height="3.5" fill="#000000" />
<text x="330.9" y="1017.7" font-size="10" fill="#35513c" text-anchor="middle" font-weight="400" >15:02</text>
<rect x="392" y="1008" width="1" height="3.5" fill="#000000" />
<text x="392.04" y="1017.7" font-size="10" fill="#35513c" text-anchor="middle" font-weight="400" >15:04</text>
<rect x="453" y="1008" width="1" height="3.5" fill="#000000" />
<text x="453.18" y="1017.7" font-size="10" fill="#35513c" text-anchor="middle" font-weight="400" >15:06</text>
<rect x="514" y="1008" width="1" height="3.5" fill="#000000" />
<text x="514.32" y="1017.7" font-size="10" fill="#35513c" text-anchor="middle" font-weight="400" >15:08</text>
<rect x="575" y="1008" width="1" height="3.5" fill="#000000" />
<text x="575.46" y="1017.7" font-size="10" fill="#35513c" text-anchor="middle" font-weight="400" >15:10</text>
<rect x="636" y="1008" width="1" height="3.5" fill="#000000" />
<text x="636.6" y="1017.7" font-size="10" fill="#35513c" text-anchor="middle" font-weight="400" >15:12</text>
<rect x="697" y="1008" width="1" height="3.5" fill="#000000" />
<text x="697.74" y="1017.7" font-size="10" fill="#35513c" text-anchor="middle" font-weight="400" >15:14</text>
<rect x="758" y="1008" width="1" height="3.5" fill="#000000" />
<text x="758.8800000000001" y="1017.7" font-size="10" fill="#35513c" text-anchor="middle" font-weight="400" >15:16</text>
<rect x="820" y="1008" width="1" height="3.5" fill="#000000" />
<text x="820.0200000000001" y="1017.7" font-size="10" fill="#35513c" text-anchor="middle" font-weight="400" >15:18</text>
<rect x="881" y="1008" width="1" height="3.5" fill="#000000" />
<text x="881.1600000000001" y="1017.7" font-size="10" fill="#35513c" text-anchor="middle" font-weight="400" >15:20</text>
<rect x="942" y="1008" width="1" height="3.5" fill="#000000" />
<text x="942.3000000000001" y="1017.7" font-size="10" fill="#35513c" text-anchor="middle" font-weight="400" >15:22</text>
<rect x="1003" y="1008" width="1" height="3.5" fill="#000000" />
<text x="1003.44" y="1017.7" font-size="10" fill="#35513c" text-anchor="middle" font-weight="400" >15:24</text>
<rect x="1064" y="1008" width="1" height="3.5" fill="#000000" />
<text x="1064.5800000000002" y="1017.7" font-size="10" fill="#35513c" text-anchor="middle" font-weight="400" >15:26</text>
<rect x="1125" y="1008" width="1" height="3.5" fill="#000000" />
<text x="1125.72" y="1017.7" font-size="10" fill="#35513c" text-anchor="middle" font-weight="400" >15:28</text>
<rect x="1186" y="1008" width="1" height="3.5" fill="#000000" />
<text x="1186.8600000000001" y="1017.7" font-size="10" fill="#35513c" text-anchor="middle" font-weight="400" >15:30</text>
<rect x="1248" y="1008" width="1" height="3.5" fill="#000000" />
<text x="1248.0" y="1017.7" font-size="10" fill="#35513c" text-anchor="middle" font-weight="400" >15:32</text>
<rect x="1309" y="1008" width="1" height="3.5" fill="#000000" />
<text x="1309.14" y="1017.7" font-size="10" fill="#35513c" text-anchor="middle" font-weight="400" >15:34</text>
<rect x="1370" y="1008" width="1" height="3.5" fill="#000000" />
<text x="1370.28" y="1017.7" font-size="10" fill="#35513c" text-anchor="middle" font-weight="400" >15:36</text>
<rect x="1431" y="1008" width="1" height="3.5" fill="#000000" />
<text x="1431.42" y="1017.7" font-size="10" fill="#35513c" text-anchor="middle" font-weight="400" >15:38</text>
<rect x="1492" y="1008" width="1" height="3.5" fill="#000000" />
<text x="1492.5600000000002" y="1017.7" font-size="10" fill="#35513c" text-anchor="middle" font-weight="400" >15:40</text>
<rect x="1553" y="1008" width="1" height="3.5" fill="#000000" />
<text x="1553.7" y="1017.7" font-size="10" fill="#35513c" text-anchor="middle" font-weight="400" >15:42</text>
<rect x="1614" y="1008" width="1" height="3.5" fill="#000000" />
<text x="1614.8400000000001" y="1017.7" font-size="10" fill="#35513c" text-anchor="middle" font-weight="400" >15:44</text>
<rect x="1675" y="1008" width="1" height="3.5" fill="#000000" />
<text x="1675.98" y="1017.7" font-size="10" fill="#35513c" text-anchor="middle" font-weight="400" >15:46</text>
<rect x="1737" y="1008" width="1" height="3.5" fill="#000000" />
<text x="1737.1200000000001" y="1017.7" font-size="10" fill="#35513c" text-anchor="middle" font-weight="400" >15:48</text>
<rect x="1798" y="1008" width="1" height="3.5" fill="#000000" />
<text x="1798.26" y="1017.7" font-size="10" fill="#35513c" text-anchor="middle" font-weight="400" >15:50</text>
<rect x="1859" y="1008" width="1" height="3.5" fill="#000000" />
<text x="1859.4" y="1017.7" font-size="10" fill="#35513c" text-anchor="middle" font-weight="400" >15:52</text>
</g>
</svg>
</body></html>
